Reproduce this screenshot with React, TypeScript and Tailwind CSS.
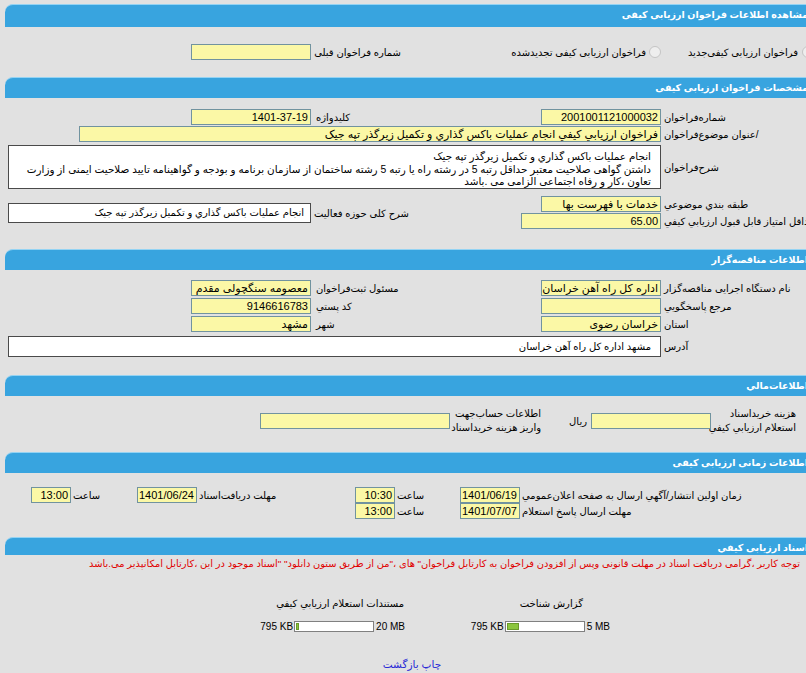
import React from 'react';

function Bar({ title, h = 'h-[21px]' }: { title: string; h?: string }) {
    return (
        <div className={`ml-[5px] ${h} rounded-tl-[8px] border-t border-[#94d3f3] bg-[#38a4df] pr-[22px] text-right text-[9.5px] font-bold leading-[19px] text-white whitespace-nowrap`}>
            {title}
        </div>
    );
}

function Field({ w, value = '' }: { w: string; value?: string }) {
    return (
        <div className={`${w} h-[16px] shrink-0 overflow-hidden whitespace-nowrap border border-[#71939f] bg-[#fbf8a6] px-[2px] text-right text-[11px] leading-[14px]`}>
            {value}
        </div>
    );
}

function Radio() {
    return <span className="inline-block h-[12px] w-[12px] shrink-0 rounded-full border border-[#c4c4c4] bg-[#eeeeee]" />;
}

function PairRow({ l1, v1, l2, v2 }: { l1: string; v1?: string; l2: string; v2?: string }) {
    return (
        <div className="flex h-[16px] items-center">
            <div className="w-[169px] shrink-0 pl-[3px] text-left whitespace-nowrap">{l1}</div>
            <Field w="w-[120px]" value={v1} />
            <div className="w-[140px] shrink-0" />
            <div className="w-[90px] shrink-0 pl-[5px] text-left whitespace-nowrap">{l2}</div>
            <Field w="w-[120px]" value={v2} />
        </div>
    );
}

function Progress({ fill, max }: { fill: string; max: string }) {
    return (
        <div dir="ltr" className="flex items-center justify-end whitespace-nowrap">
            <span className="shrink-0">795 KB</span>
            <div className="ml-[1px] h-[11px] w-[80px] shrink-0 border border-[#808080] bg-white p-[1px]">
                <div className={`h-full ${fill} border border-[#6a9a2a] bg-[#8cc63e]`} />
            </div>
            <span className="ml-[2px] shrink-0">{max}</span>
        </div>
    );
}

export default function App() {
    return (
        <div className="h-[673px] w-[806px] overflow-hidden bg-[#e1e1e1] font-['Liberation_Sans','DejaVu_Sans',sans-serif] text-[10px] text-black">
            <div dir="rtl" className="w-[830px] pt-[4px]">
                <Bar title="مشاهده اطلاعات فراخوان ارزیابی کیفی" h="h-[23px]" />

                <div className="mt-[17px] flex h-[16px] items-center">
                    <div className="flex w-[169px] shrink-0 items-center gap-[4px] pr-[16px] whitespace-nowrap">
                        <Radio />
                        <span>فراخوان ارزیابی کیفی‌جدید</span>
                    </div>
                    <div className="flex w-[260px] shrink-0 items-center gap-[3px] whitespace-nowrap">
                        <Radio />
                        <span>فراخوان ارزیابی کیفی تجدیدشده</span>
                    </div>
                    <div className="w-[90px] shrink-0 pl-[5px] text-left whitespace-nowrap">شماره فراخوان قبلی</div>
                    <Field w="w-[120px]" />
                </div>

                <div className="mt-[17px]">
                    <Bar title="مشخصات فراخوان ارزیابی کیفی" />
                </div>

                <div className="mt-[11px]">
                    <PairRow l1="شماره‌فراخوان" v1="2001001121000032" l2="کلیدواژه" v2="1401-37-19" />
                </div>
                <div className="mt-[1px] flex h-[16px] items-center">
                    <div className="w-[169px] shrink-0 pl-[3px] text-left whitespace-nowrap">/عنوان موضوع‌فراخوان</div>
                    <Field w="w-[582px]" value="فراخوان ارزیابي کیفي انجام عملیات باکس گذاري و تکمیل زیرگذر تپه جیک" />
                </div>
                <div className="mt-[3px] flex items-center">
                    <div className="w-[169px] shrink-0 pl-[3px] text-left whitespace-nowrap">شرح‌فراخوان</div>
                    <div className="h-[44px] w-[653px] border border-[#4a4a4a] bg-white pr-[9px] pt-[5px] text-[10.4px] leading-[12.5px] whitespace-nowrap">
                        <div>انجام عملیات باکس گذاري و تکمیل زیرگذر تپه جیک</div>
                        <div>داشتن گواهی صلاحیت معتبر حداقل رتبه 5 در رشته راه یا رتبه 5 رشته ساختمان از سازمان برنامه و بودجه و گواهینامه تایید صلاحیت ایمنی از وزارت</div>
                        <div>تعاون ،کار و رفاه اجتماعی الزامی می .باشد</div>
                    </div>
                </div>

                <div className="mt-[7px] flex items-start">
                    <div className="w-[309px] shrink-0">
                        <div className="flex h-[16px] items-center">
                            <div className="w-[169px] shrink-0 pl-[3px] text-left whitespace-nowrap">طبقه بندي موضوعي</div>
                            <Field w="w-[120px]" value="خدمات با فهرست بها" />
                        </div>
                        <div className="mt-[1px] flex h-[16px] items-center">
                            <div className="w-[169px] shrink-0 pl-[3px] text-left whitespace-nowrap">حداقل امتیاز قابل قبول ارزیابي کیفي</div>
                            <Field w="w-[140px]" value="65.00" />
                        </div>
                    </div>
                    <div className="w-[112px] shrink-0" />
                    <div className="mt-[7px] flex items-center">
                        <div className="w-[98px] shrink-0 pl-[5px] text-left whitespace-nowrap">شرح کلی حوزه فعالیت</div>
                        <div className="h-[20px] w-[303px] border border-[#4a4a4a] bg-white pr-[6px] leading-[18px] whitespace-nowrap">
                            انجام عملیات باکس گذاري و تکمیل زیرگذر تپه جیک
                        </div>
                    </div>
                </div>

                <div className="mt-[20px]">
                    <Bar title="اطلاعات مناقصه‌گزار" />
                </div>

                <div className="mt-[10px] flex flex-col gap-[2px]">
                    <PairRow l1="نام دستگاه اجرایی مناقصه‌گزار" v1="اداره کل راه آهن خراسان" l2="مسئول ثبت‌فراخوان" v2="معصومه سنگچولی مقدم" />
                    <PairRow l1="مرجع پاسخگویي" l2="کد پستي" v2="9146616783" />
                    <PairRow l1="استان" v1="خراسان رضوی" l2="شهر" v2="مشهد" />
                </div>
                <div className="mt-[4px] flex items-center">
                    <div className="w-[169px] shrink-0 pl-[3px] text-left whitespace-nowrap">آدرس</div>
                    <div className="h-[21px] w-[653px] border border-[#4a4a4a] bg-white pr-[9px] leading-[19px] whitespace-nowrap">
                        مشهد اداره کل راه آهن خراسان
                    </div>
                </div>

                <div className="mt-[18px]">
                    <Bar title="اطلاعات‌مالي" />
                </div>

                <div className="mt-[11px] flex h-[28px] items-center">
                    <div className="w-[119px] shrink-0 pr-[34px] leading-[14px] whitespace-nowrap">
                        <div>هزینه خریداسناد</div>
                        <div>استعلام ارزیابي کیفي</div>
                    </div>
                    <Field w="w-[120px]" />
                    <div className="w-[50px] shrink-0 pr-[4px]">ریال</div>
                    <div className="w-[91px] shrink-0 leading-[14px] whitespace-nowrap">
                        <div>اطلاعات حساب‌جهت</div>
                        <div>واریز هزینه خریداسناد</div>
                    </div>
                    <Field w="w-[190px]" />
                </div>

                <div className="mt-[17px]">
                    <Bar title="اطلاعات زمانی ارزیابی کیفی" />
                </div>

                <div className="mt-[14px] flex h-[16px] items-center">
                    <div className="w-[310px] shrink-0 pl-[2px] text-left whitespace-nowrap">زمان اولین انتشار/آگهي ارسال به صفحه اعلان‌عمومي</div>
                    <Field w="w-[60px]" value="1401/06/19" />
                    <div className="w-[65px] shrink-0 pl-[2px] text-left">ساعت</div>
                    <Field w="w-[40px]" value="10:30" />
                    <div className="w-[158px] shrink-0 pl-[2px] text-left whitespace-nowrap">مهلت دریافت‌اسناد</div>
                    <Field w="w-[60px]" value="1401/06/24" />
                    <div className="w-[66px] shrink-0 pl-[2px] text-left">ساعت</div>
                    <Field w="w-[40px]" value="13:00" />
                </div>
                <div className="flex h-[16px] items-center">
                    <div className="w-[310px] shrink-0 pl-[2px] text-left whitespace-nowrap">مهلت ارسال پاسخ استعلام</div>
                    <Field w="w-[60px]" value="1401/07/07" />
                    <div className="w-[65px] shrink-0 pl-[2px] text-left">ساعت</div>
                    <Field w="w-[40px]" value="13:00" />
                </div>

                <div className="mt-[18px]">
                    <Bar title="اسناد ارزیابی کیفي" h="h-[18px]" />
                </div>

                <div className="mt-[2px] pr-[30px] text-[9.9px] leading-[14px] whitespace-nowrap text-[#e00000]">
                    توجه کاربر ،گرامی دریافت اسناد در مهلت قانونی وپس از افزودن فراخوان به کارتابل فراخوان" های ،"من از طریق ستون دانلود" "اسناد موجود در این ،کارتابل امکانپذیر می.باشد
                </div>

                <div className="mt-[26px] flex pr-[220px]">
                    <div className="w-[150px] shrink-0">
                        <div className="pr-[27px] leading-[14px]">گزارش شناخت</div>
                        <div className="mt-[8px]">
                            <Progress fill="w-[12px]" max="5 MB" />
                        </div>
                    </div>
                    <div className="w-[55px] shrink-0" />
                    <div className="w-[150px] shrink-0">
                        <div className="pr-[1px] leading-[14px] whitespace-nowrap">مستندات استعلام ارزیابي کیفي</div>
                        <div className="mt-[8px]">
                            <Progress fill="w-[3px]" max="20 MB" />
                        </div>
                    </div>
                </div>

                <div className="mt-[23px] pr-[6px] text-center text-[10.5px] leading-[14px] text-[#2a2ad6]">
                    <span>چاپ</span> <span>بازگشت</span>
                </div>
            </div>
        </div>
    );
}
